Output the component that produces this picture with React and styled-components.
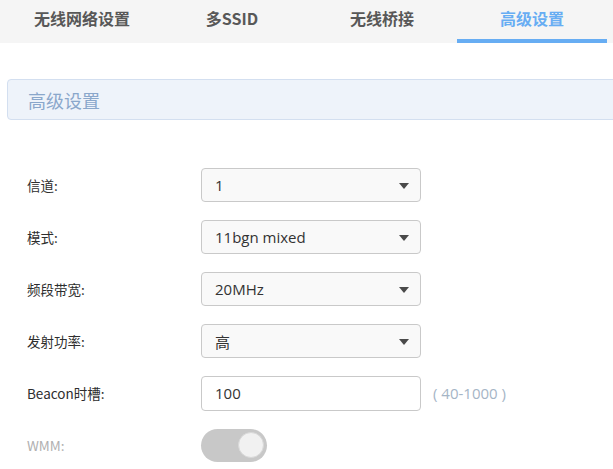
import React from "react";
import styled, { createGlobalStyle } from "styled-components";

const Global = createGlobalStyle`
  html, body { margin: 0; padding: 0; background: #fff; overflow: hidden; }
  body { font-family: "Open Sans", "Noto Sans CJK SC", sans-serif; color: #333; }
`;

const Page = styled.div`
  width: 613px;
  height: 469px;
  overflow: hidden;
`;

const TabBar = styled.div`
  display: flex;
  background: #f5f5f5;
  padding-left: 7px;
  height: 43px;
`;

const Tab = styled.div`
  width: 150px;
  box-sizing: border-box;
  height: 43px;
  line-height: 37px;
  text-align: center;
  font-family: "Noto Sans CJK SC", sans-serif;
  font-size: 16px;
  font-weight: 700;
  color: ${(p) => (p.$active ? "#67adf3" : "#585858")};
  border-bottom: 4px solid ${(p) => (p.$active ? "#67adf3" : "transparent")};
`;

const Content = styled.div`
  padding: 36px 0 0 7px;
`;

const SectionHeader = styled.div`
  width: 700px;
  height: 41px;
  box-sizing: border-box;
  border: 1px solid #d3dff0;
  border-radius: 4px;
  background: #eef3fa;
  padding-left: 20px;
  display: flex;
  align-items: center;
  font-family: "Noto Sans CJK SC", sans-serif;
  font-size: 18px;
  color: #8aa7cb;
`;

const Form = styled.div`
  padding: 48px 0 0 20px;
  display: flex;
  flex-direction: column;
  gap: 18px;
`;

const Row = styled.div`
  display: flex;
  align-items: center;
  height: 34px;
`;

const Label = styled.div`
  width: 174px;
  font-family: "Noto Sans CJK SC", sans-serif;
  font-size: 13.5px;
  color: ${(p) => (p.$disabled ? "#b0b0b0" : "#2e2e2e")};
`;

const SelectBox = styled.div`
  position: relative;
  width: 220px;
  height: 34px;
  box-sizing: border-box;
  border: 1px solid #c9c9c9;
  border-radius: 4px;
  background: #f9f9f9;
  padding-left: 13px;
  display: flex;
  align-items: center;
  font-size: 15px;
  color: #333;
  font-family: "Open Sans", "Noto Sans CJK SC", sans-serif;
`;

const Arrow = styled.span`
  position: absolute;
  right: 11px;
  top: 14px;
  width: 0;
  height: 0;
  border-left: 5px solid transparent;
  border-right: 5px solid transparent;
  border-top: 6px solid #4a4a4a;
`;

const TextInput = styled(SelectBox)`
  background: #fff;
  height: 35px;
`;

const Hint = styled.span`
  margin-left: 12px;
  font-size: 15px;
  color: #a5b5c6;
  font-family: "Open Sans", sans-serif;
`;

const Toggle = styled.div`
  width: 66px;
  height: 33px;
  border-radius: 17px;
  background: #c8c8c8;
  display: flex;
  align-items: center;
  justify-content: flex-end;
  padding-right: 3px;
  box-sizing: border-box;
`;

const Knob = styled.div`
  width: 26px;
  height: 26px;
  border-radius: 50%;
  background: #f1f1f1;
  border: 1px solid #d8d8d8;
  box-sizing: border-box;
`;

const tabs = ["无线网络设置", "多SSID", "无线桥接", "高级设置"];

const selects = [
  ["信道:", "1"],
  ["模式:", "11bgn mixed"],
  ["频段带宽:", "20MHz"],
  ["发射功率:", "高"],
];

export default function App() {
  return (
    <Page>
      <Global />
      <TabBar>
        {tabs.map((t, i) => (
          <Tab key={t} $active={i === 3}>
            {t}
          </Tab>
        ))}
      </TabBar>
      <Content>
        <SectionHeader>高级设置</SectionHeader>
        <Form>
          {selects.map(([l, v]) => (
            <Row key={l}>
              <Label>{l}</Label>
              <SelectBox>
                {v}
                <Arrow />
              </SelectBox>
            </Row>
          ))}
          <Row>
            <Label>Beacon时槽:</Label>
            <TextInput>100</TextInput>
            <Hint>( 40-1000 )</Hint>
          </Row>
          <Row>
            <Label $disabled>WMM:</Label>
            <Toggle>
              <Knob />
            </Toggle>
          </Row>
        </Form>
      </Content>
    </Page>
  );
}
